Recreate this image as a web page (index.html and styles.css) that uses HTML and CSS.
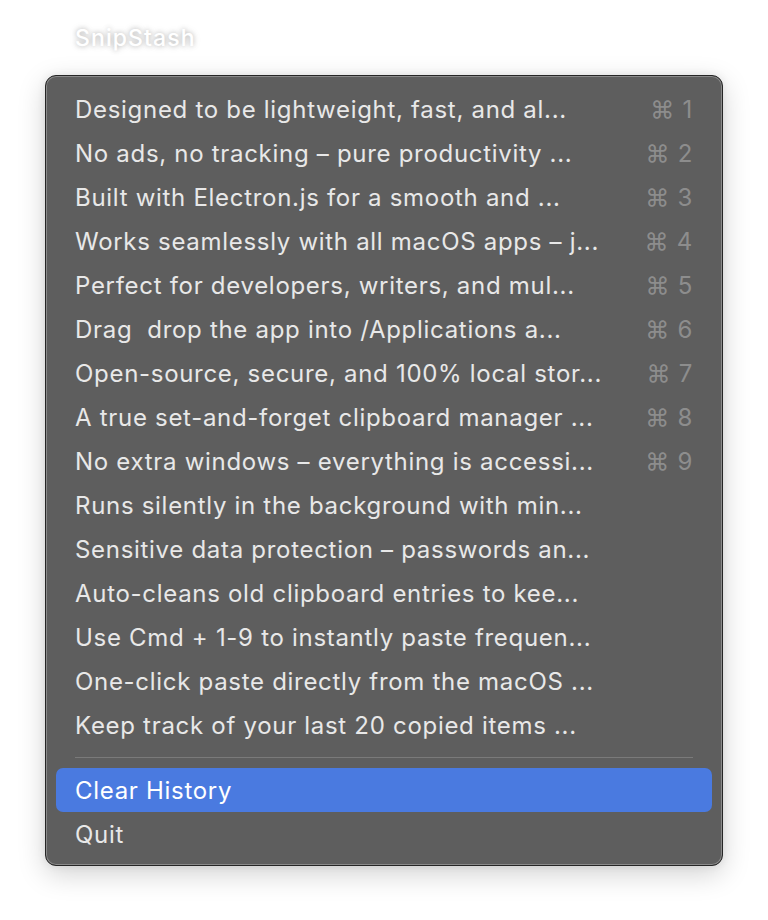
FILE: index.html
```html
<!DOCTYPE html>
<html>
<head>
<meta charset="utf-8">
<link rel="stylesheet" href="styles.css">
</head>
<body>
<div class="title">SnipStash</div>
<div class="menu">
  <div class="item"><span class="label">Designed to be lightweight, fast, and al...</span><span class="key">⌘ 1</span></div>
  <div class="item"><span class="label">No ads, no tracking – pure productivity ...</span><span class="key">⌘ 2</span></div>
  <div class="item"><span class="label">Built with Electron.js for a smooth and ...</span><span class="key">⌘ 3</span></div>
  <div class="item"><span class="label">Works seamlessly with all macOS apps – j...</span><span class="key">⌘ 4</span></div>
  <div class="item"><span class="label">Perfect for developers, writers, and mul...</span><span class="key">⌘ 5</span></div>
  <div class="item"><span class="label">Drag &nbsp;drop the app into /Applications a...</span><span class="key">⌘ 6</span></div>
  <div class="item"><span class="label">Open-source, secure, and 100% local stor...</span><span class="key">⌘ 7</span></div>
  <div class="item"><span class="label">A true set-and-forget clipboard manager ...</span><span class="key">⌘ 8</span></div>
  <div class="item"><span class="label">No extra windows – everything is accessi...</span><span class="key">⌘ 9</span></div>
  <div class="item"><span class="label">Runs silently in the background with min...</span></div>
  <div class="item"><span class="label">Sensitive data protection – passwords an...</span></div>
  <div class="item"><span class="label">Auto-cleans old clipboard entries to kee...</span></div>
  <div class="item"><span class="label">Use Cmd + 1-9 to instantly paste frequen...</span></div>
  <div class="item"><span class="label">One-click paste directly from the macOS ...</span></div>
  <div class="item"><span class="label">Keep track of your last 20 copied items ...</span></div>
  <div class="sep"></div>
  <div class="item active"><span class="label">Clear History</span></div>
  <div class="item"><span class="label">Quit</span></div>
</div>
</body>
</html>
```
FILE: styles.css
```css
html, body {
  margin: 0;
  padding: 0;
  background: #ffffff;
  font-family: Inter, "Noto Sans", sans-serif;
}
body {
  width: 768px;
  height: 920px;
  overflow: hidden;
}
.title {
  padding: 23px 0 0 75px;
  height: 75px;
  box-sizing: border-box;
  font-size: 23px;
  font-weight: 500;
  letter-spacing: 1.1px;
  color: #ffffff;
  text-shadow: 0 0 5px rgba(0,0,0,0.28), 0 0 10px rgba(0,0,0,0.12);
  line-height: 30px;
}
.menu {
  margin-left: 45px;
  width: 678px;
  box-sizing: border-box;
  background: #5e5e5e;
  border: 1px solid #262626;
  border-radius: 11px;
  box-shadow: inset 0 0 0 1px #8a8a8a, 0 8px 28px rgba(0,0,0,0.18), 0 0 8px rgba(0,0,0,0.08);
  padding: 11px 10px 9px;
}
.item {
  display: flex;
  align-items: center;
  justify-content: space-between;
  height: 44px;
  padding: 0 19px 0 19px;
  border-radius: 7px;
  font-size: 24px;
  letter-spacing: 0.7px;
  color: #e8e8e8;
  white-space: nowrap;
}
.key {
  color: #8d8d8d;
}
.item.active {
  background: #4a7ae0;
  color: #ffffff;
}
.sep {
  height: 1px;
  background: #7a7a7a;
  margin: 10px 19px;
}
```
